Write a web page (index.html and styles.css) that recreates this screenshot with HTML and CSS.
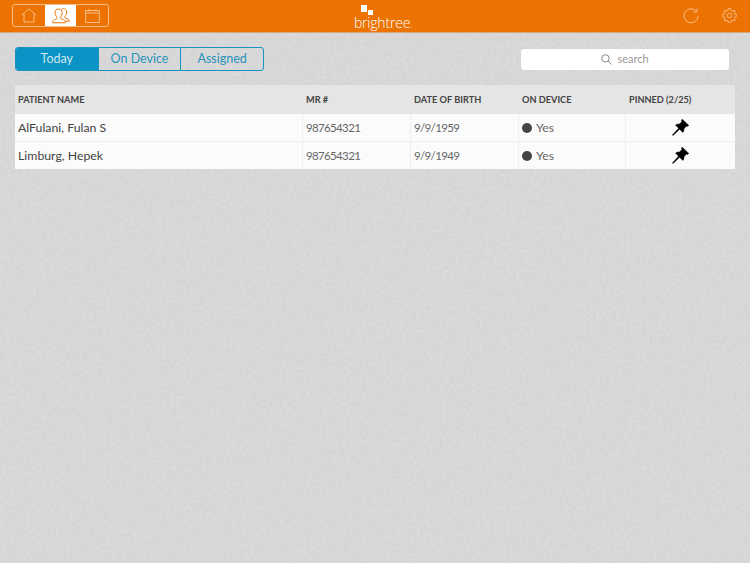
FILE: index.html
```html
<!DOCTYPE html>
<html lang="en">
<head>
    <meta charset="UTF-8">
    <title>Brightree Patients</title>
    <link rel="stylesheet" href="styles.css">
</head>
<body>
    <svg class="texture" width="750" height="563">
        <filter id="paper">
            <feTurbulence type="fractalNoise" baseFrequency="0.3" numOctaves="3" seed="4"/>
            <feColorMatrix type="matrix" values="0 0 0 0 0.45  0 0 0 0 0.45  0 0 0 0 0.45  0.3 0 0 0 -0.08"/>
        </filter>
        <rect width="750" height="563" filter="url(#paper)"/>
    </svg>

    <div class="header">
        <div class="nav-group">
            <div class="nav-item">
                <svg width="16" height="15" viewBox="0 0 16 15" fill="none" stroke="currentColor" stroke-width="1">
                    <path d="M0.7 7.2 L8 0.8 L15.3 7.2"/>
                    <path d="M3 5.6 V14 H13 V5.6"/>
                </svg>
            </div>
            <div class="nav-item active">
                <svg width="18" height="16" viewBox="0 0 18 16" fill="none" stroke="currentColor" stroke-width="1">
                    <path d="M9.5 1.2 C11.8 0 14.5 1 14.6 4 C14.6 6.2 13.6 7.6 12.8 8.4 C12.6 9.6 13.4 10 15 10.6 C16.4 11.2 17.4 11.8 17.4 13.2 H13.5"/>
                    <path d="M6.5 1 C9 1 10.2 2.6 10.2 4.8 C10.2 6.6 9.4 8 8.4 9 C8.2 10.2 9 10.7 10.6 11.3 C12.2 11.9 13.4 12.6 13.4 14.8 H0.6 C0.6 12.6 1.8 11.9 3.4 11.3 C5 10.7 5.4 10.2 5.1 9 C4 8 3 6.6 3 4.8 C3 2.6 4.2 1 6.5 1 Z"/>
                </svg>
            </div>
            <div class="nav-item">
                <svg width="15" height="14" viewBox="0 0 15 14" fill="none" stroke="currentColor" stroke-width="1">
                    <rect x="0.7" y="1.5" width="13.6" height="12"/>
                    <path d="M0.7 4 H14.3 M4 0 V2.5 M11 0 V2.5"/>
                </svg>
            </div>
        </div>
        <div class="logo">
            <div class="logo-mark">
                <span class="square-big"></span>
                <span class="square-small"></span>
            </div>
            <div class="logo-text">brightree<span class="logo-dot">.</span></div>
        </div>
        <div class="header-actions">
            <svg width="16" height="16" viewBox="0 0 16 16" fill="none" stroke="currentColor" stroke-width="1">
                <path d="M13.6 3.6 A7 7 0 1 0 15 8"/>
                <path d="M14 0.5 V4 H10.5"/>
            </svg>
            <svg width="15" height="15" viewBox="0 0 15 15" fill="none" stroke="currentColor" stroke-width="1">
                <circle cx="7.5" cy="7.5" r="2.3"/>
                <path d="M6.2 0.7 H8.8 L9.2 2.5 L10.8 3.2 L12.4 2.3 L13 4.6 L12.2 5.8 L14.3 6.4 V8.6 L12.6 9.2 L12.4 10.6 L13 12.2 L10.9 12.8 L9.4 12.6 L8.8 14.3 H6.2 L5.6 12.6 L4.1 12.8 L2 12.2 L2.6 10.6 L2.4 9.2 L0.7 8.6 V6.4 L2.8 5.8 L2 4.6 L2.6 2.3 L4.2 3.2 L5.8 2.5 Z"/>
            </svg>
        </div>
    </div>

    <div class="toolbar">
        <div class="tabs">
            <div class="tab selected">Today</div>
            <div class="tab">On Device</div>
            <div class="tab">Assigned</div>
        </div>
        <div class="search">
            <svg width="11" height="11" viewBox="0 0 11 11" fill="none" stroke="#888" stroke-width="1">
                <circle cx="4.4" cy="4.4" r="3.7"/>
                <path d="M7 7 L10.6 10.6"/>
            </svg>
            <span>search</span>
        </div>
    </div>

    <div class="patients">
        <div class="row head">
            <div class="cell">PATIENT NAME</div>
            <div class="cell">MR #</div>
            <div class="cell">DATE OF BIRTH</div>
            <div class="cell">ON DEVICE</div>
            <div class="cell">PINNED (2/25)</div>
        </div>
        <div class="row">
            <div class="cell name">AlFulani, Fulan S</div>
            <div class="cell num">987654321</div>
            <div class="cell num">9/9/1959</div>
            <div class="cell"><span class="dot"></span>Yes</div>
            <div class="cell pin">
                <svg width="17" height="17" viewBox="0 0 17 17"><path d="M10.2 0.2 L16.8 6.4 L15.4 7.4 L14.4 7 L11.8 10 C12.2 11.4 11.8 12.4 10.8 13.4 L7.6 10.2 L1 16.6 L0.4 16 L6.6 9.2 L3.6 6.2 C4.6 5.2 5.8 4.8 7.2 5.2 L10 2.6 L9.4 1.4 Z" fill="#000" stroke="#000" stroke-width="0.5"/></svg>
            </div>
        </div>
        <div class="row">
            <div class="cell name">Limburg, Hepek</div>
            <div class="cell num">987654321</div>
            <div class="cell num">9/9/1949</div>
            <div class="cell"><span class="dot"></span>Yes</div>
            <div class="cell pin">
                <svg width="17" height="17" viewBox="0 0 17 17"><path d="M10.2 0.2 L16.8 6.4 L15.4 7.4 L14.4 7 L11.8 10 C12.2 11.4 11.8 12.4 10.8 13.4 L7.6 10.2 L1 16.6 L0.4 16 L6.6 9.2 L3.6 6.2 C4.6 5.2 5.8 4.8 7.2 5.2 L10 2.6 L9.4 1.4 Z" fill="#000" stroke="#000" stroke-width="0.5"/></svg>
            </div>
        </div>
    </div>
</body>
</html>
```

FILE: styles.css
```css
html, body {
    height: 100%;
}
body {
    font-family: 'Lato', 'Open Sans', sans-serif;
    background-color: #dadada;
    margin: 0;
    color: #555;
    overflow: hidden;
    position: relative;
}
.texture {
    position: absolute;
    top: 0;
    left: 0;
}
.header {
    position: relative;
    display: grid;
    grid-template-columns: 1fr auto 1fr;
    align-items: center;
    box-sizing: border-box;
    height: 33px;
    padding: 0 13px 1px 12px;
    background-color: #ec7202;
    border-bottom: 1px solid #d6a77a;
    color: #f6bd88;
}
.nav-group {
    display: flex;
    width: 97px;
    height: 23px;
    box-sizing: border-box;
    border: 1px solid #f6bd88;
    border-radius: 3px;
    overflow: hidden;
}
.nav-item {
    flex: 1;
    display: flex;
    align-items: center;
    justify-content: center;
}
.nav-item.active {
    background-color: white;
    color: #ec7202;
}
.logo {
    display: flex;
    flex-direction: column;
    align-items: flex-start;
    color: white;
    margin-left: 17px;
    padding-top: 4px;
}
.logo-mark {
    display: flex;
    align-items: flex-end;
    gap: 1px;
    margin-left: 7px;
    height: 11px;
}
.square-big {
    width: 6px;
    height: 7px;
    margin-bottom: 4px;
    background-color: white;
}
.square-small {
    width: 5px;
    height: 5px;
    margin-bottom: 1px;
    background-color: white;
}
.logo-text {
    font-family: 'Open Sans', sans-serif;
    font-weight: 300;
    font-size: 14px;
    line-height: 13px;
    letter-spacing: -0.2px;
}
.logo-dot {
    font-size: 9px;
}
.header-actions {
    display: flex;
    align-items: center;
    justify-content: flex-end;
    gap: 23px;
}
.toolbar {
    position: relative;
    display: flex;
    align-items: center;
    justify-content: space-between;
    padding: 14px 21px 14px 15px;
}
.tabs {
    display: flex;
    box-sizing: border-box;
    width: 249px;
    height: 24px;
    border: 1px solid #1a93c0;
    border-radius: 3px;
    overflow: hidden;
}
.tab {
    flex: 1;
    text-align: center;
    font-size: 12.5px;
    line-height: 21px;
    color: #2a93bb;
    border-left: 1px solid #1a93c0;
}
.tab:first-child {
    border-left: none;
}
.tab.selected {
    background-color: #0a94c6;
    color: #cfe6f0;
}
.search {
    display: flex;
    align-items: center;
    justify-content: center;
    gap: 5px;
    width: 208px;
    height: 21px;
    background-color: white;
    border-radius: 3px;
    font-size: 11px;
    line-height: 19px;
    color: #999;
}
.search span {
    padding-bottom: 2px;
}
.patients {
    position: relative;
    margin: 0 15px;
    width: 720px;
    background-color: #eeeeee;
}
.row {
    display: grid;
    grid-template-columns: 287px 108px 108px 107px 110px;
    height: 27px;
    margin-bottom: 1px;
    background-color: #fbfbfb;
    font-size: 12.3px;
    color: #666;
}
.row.head {
    height: 29px;
    margin-bottom: 0;
    background-color: #e5e5e5;
    font-size: 9.2px;
    font-weight: bold;
    color: #444;
}
.row:last-child {
    margin-bottom: 0;
}
.cell {
    display: flex;
    align-items: center;
    padding-left: 3px;
    border-left: 1px solid #eeeeee;
}
.cell:first-child {
    border-left: none;
    padding-left: 3px;
}
.head .cell {
    border-left: 1px solid transparent;
}
.head .cell:first-child {
    border-left: none;
}
.name {
    color: #444;
}
.num {
    font-size: 11.5px;
    letter-spacing: -0.65px;
}
.dot {
    width: 10px;
    height: 10px;
    margin-right: 4px;
    border-radius: 50%;
    background-color: #444;
}
.row .pin {
    justify-content: center;
    padding: 0;
}
```
